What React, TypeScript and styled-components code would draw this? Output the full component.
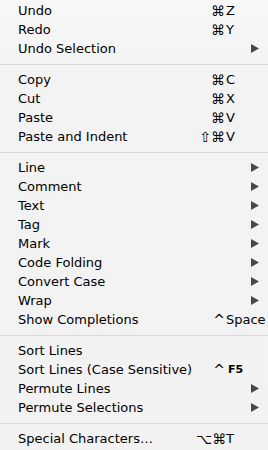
import * as React from 'react'
import styled, { createGlobalStyle } from 'styled-components'

type Item =
  | { kind: 'sep' }
  | { kind: 'item'; label: string; mods?: string; keyName?: string; small?: boolean; sub?: boolean }

const items: Item[] = [
  { kind: 'item', label: 'Undo', mods: '⌘', keyName: 'Z' },
  { kind: 'item', label: 'Redo', mods: '⌘', keyName: 'Y' },
  { kind: 'item', label: 'Undo Selection', sub: true },
  { kind: 'sep' },
  { kind: 'item', label: 'Copy', mods: '⌘', keyName: 'C' },
  { kind: 'item', label: 'Cut', mods: '⌘', keyName: 'X' },
  { kind: 'item', label: 'Paste', mods: '⌘', keyName: 'V' },
  { kind: 'item', label: 'Paste and Indent', mods: '⇧⌘', keyName: 'V' },
  { kind: 'sep' },
  { kind: 'item', label: 'Line', sub: true },
  { kind: 'item', label: 'Comment', sub: true },
  { kind: 'item', label: 'Text', sub: true },
  { kind: 'item', label: 'Tag', sub: true },
  { kind: 'item', label: 'Mark', sub: true },
  { kind: 'item', label: 'Code Folding', sub: true },
  { kind: 'item', label: 'Convert Case', sub: true },
  { kind: 'item', label: 'Wrap', sub: true },
  { kind: 'item', label: 'Show Completions', mods: '^', keyName: 'Space' },
  { kind: 'sep' },
  { kind: 'item', label: 'Sort Lines' },
  { kind: 'item', label: 'Sort Lines (Case Sensitive)', mods: '^', keyName: 'F5', small: true },
  { kind: 'item', label: 'Permute Lines', sub: true },
  { kind: 'item', label: 'Permute Selections', sub: true },
  { kind: 'sep' },
  { kind: 'item', label: 'Special Characters…', mods: '⌥⌘', keyName: 'T' },
]

export default function App() {
  return (
    <>
      <GlobalStyle />
      <Menu>
        {items.map((it, i) =>
          it.kind === 'sep' ? (
            <Separator key={i} />
          ) : (
            <Row key={i}>
              <Label>{it.label}</Label>
              {it.keyName && (
                <Shortcut>
                  <Mods>{it.mods}</Mods>
                  <KeyName small={it.small}>{it.keyName}</KeyName>
                </Shortcut>
              )}
              {it.sub && (
                <Arrow viewBox="0 0 8 9">
                  <path d="M0 0 L8 4.5 L0 9 Z" fill="#484848" />
                </Arrow>
              )}
            </Row>
          )
        )}
      </Menu>
    </>
  )
}

const GlobalStyle = createGlobalStyle`
  html, body {
    margin: 0;
    padding: 0;
    background: #f3f3f3;
    overflow: hidden;
  }
`
const Menu = styled.div`
  width: 268px;
  height: 450px;
  padding-top: 1px;
  box-sizing: border-box;
  overflow: hidden;
  background: linear-gradient(#f7f7f7, #f3f3f3 80px, #f2f2f2);
  font-family: "DejaVu Sans", Verdana, sans-serif;
  font-size: 13px;
  color: #000;
  display: flex;
  flex-direction: column;
`
const Row = styled.div`
  height: 19px;
  flex: none;
  display: flex;
  align-items: center;
  padding-left: 18px;
  white-space: nowrap;
`
const Label = styled.span`
  flex: 1;
`
const Shortcut = styled.span`
  display: flex;
  align-items: center;
  width: 72px;
`
const Mods = styled.span`
  width: 30px;
  padding-right: 1px;
  box-sizing: border-box;
  font-size: 14px;
  text-align: right;
`
const KeyName = styled.span<{ small?: boolean }>`
  font-size: ${({ small }) => (small ? '11px' : '13px')};
  font-weight: ${({ small }) => (small ? 'bold' : 'normal')};
  padding-left: ${({ small }) => (small ? '2px' : '0')};
`
const Arrow = styled.svg`
  width: 8px;
  height: 9px;
  margin-right: 9px;
`
const Separator = styled.div`
  height: 12px;
  flex: none;
  display: flex;
  align-items: center;
  &::after {
    content: '';
    flex: 1;
    height: 1px;
    background: #d9d9d9;
  }
`
